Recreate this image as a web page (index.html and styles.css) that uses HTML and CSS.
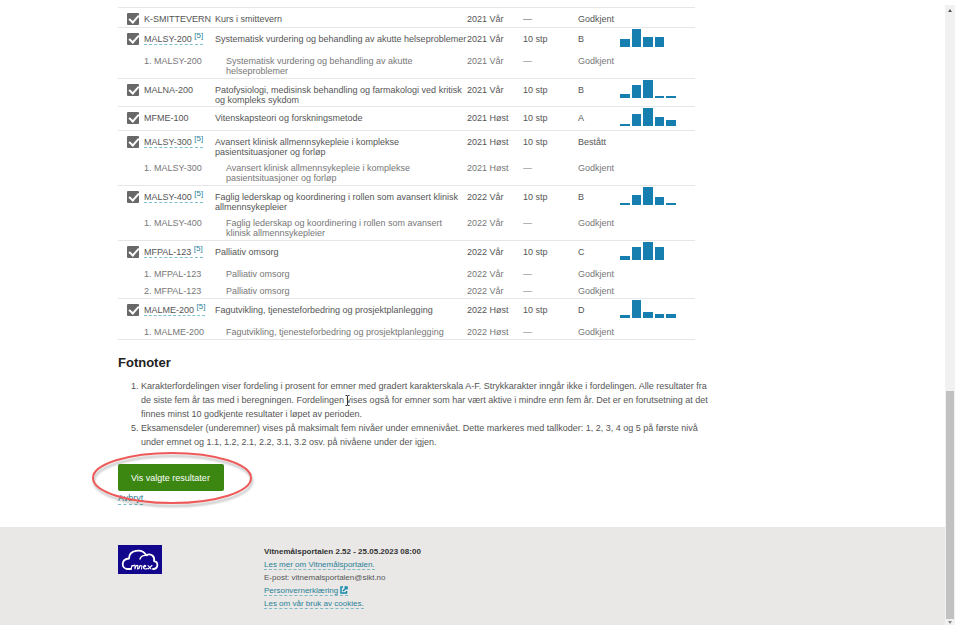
FILE: index.html
```html
<!DOCTYPE html>
<html lang="no">
<head>
  <meta charset="UTF-8">
  <meta name="viewport" content="width=device-width, initial-scale=1.0">
  <title>Vitnemålsportalen</title>
  <link rel="stylesheet" href="styles.css">
</head>
<body>
  <div class="page">
    <main>
      <table class="results">
        <colgroup>
          <col class="col-check">
          <col class="col-code">
          <col class="col-name">
          <col class="col-term">
          <col class="col-credits">
          <col class="col-grade">
          <col class="col-chart">
        </colgroup>
        <tbody>
          <tr class="course">
            <td class="check"><input type="checkbox" aria-label="K-SMITTEVERN" checked></td>
            <td>K-SMITTEVERN</td><td>Kurs i smittevern</td><td>2021 Vår</td><td>—</td><td>Godkjent</td><td></td>
          </tr>
          <tr class="course">
            <td class="check"><input type="checkbox" aria-label="MALSY-200" checked></td>
            <td><a class="code" href="#note5">MALSY-200 <sup>[5]</sup></a></td>
            <td>Systematisk vurdering og behandling av akutte helseproblemer</td><td>2021 Vår</td><td>10 stp</td><td>B</td>
            <td class="chart"><div class="bars"><i style="height:44%"></i><i style="height:100%"></i><i style="height:56%"></i><i style="height:56%"></i></div></td>
          </tr>
          <tr class="part">
            <td></td><td>1. MALSY-200</td><td class="name">Systematisk vurdering og behandling av akutte helseproblemer</td><td>2021 Vår</td><td>—</td><td>Godkjent</td><td></td>
          </tr>
          <tr class="course">
            <td class="check"><input type="checkbox" aria-label="MALNA-200" checked></td>
            <td>MALNA-200</td>
            <td>Patofysiologi, medisinsk behandling og farmakologi ved kritisk og kompleks sykdom</td><td>2021 Vår</td><td>10 stp</td><td>B</td>
            <td class="chart"><div class="bars"><i style="height:25%"></i><i style="height:72%"></i><i style="height:100%"></i><i style="height:12%"></i><i style="height:12%"></i></div></td>
          </tr>
          <tr class="course">
            <td class="check"><input type="checkbox" aria-label="MFME-100" checked></td>
            <td>MFME-100</td><td>Vitenskapsteori og forskningsmetode</td><td>2021 Høst</td><td>10 stp</td><td>A</td>
            <td class="chart"><div class="bars"><i style="height:9%"></i><i style="height:67%"></i><i style="height:100%"></i><i style="height:50%"></i><i style="height:33%"></i></div></td>
          </tr>
          <tr class="course">
            <td class="check"><input type="checkbox" aria-label="MALSY-300" checked></td>
            <td><a class="code" href="#note5">MALSY-300 <sup>[5]</sup></a></td>
            <td>Avansert klinisk allmennsykepleie i komplekse pasientsituasjoner og forløp</td><td>2021 Høst</td><td>10 stp</td><td>Bestått</td><td></td>
          </tr>
          <tr class="part">
            <td></td><td>1. MALSY-300</td><td class="name">Avansert klinisk allmennsykepleie i komplekse pasientsituasjoner og forløp</td><td>2021 Høst</td><td>—</td><td>Godkjent</td><td></td>
          </tr>
          <tr class="course">
            <td class="check"><input type="checkbox" aria-label="MALSY-400" checked></td>
            <td><a class="code" href="#note5">MALSY-400 <sup>[5]</sup></a></td>
            <td>Faglig lederskap og koordinering i rollen som avansert klinisk allmennsykepleier</td><td>2022 Vår</td><td>10 stp</td><td>B</td>
            <td class="chart"><div class="bars"><i style="height:13%"></i><i style="height:56%"></i><i style="height:100%"></i><i style="height:44%"></i><i style="height:13%"></i></div></td>
          </tr>
          <tr class="part">
            <td></td><td>1. MALSY-400</td><td class="name">Faglig lederskap og koordinering i rollen som avansert klinisk allmennsykepleier</td><td>2022 Vår</td><td>—</td><td>Godkjent</td><td></td>
          </tr>
          <tr class="course">
            <td class="check"><input type="checkbox" aria-label="MFPAL-123" checked></td>
            <td><a class="code" href="#note5">MFPAL-123 <sup>[5]</sup></a></td>
            <td>Palliativ omsorg</td><td>2022 Vår</td><td>10 stp</td><td>C</td>
            <td class="chart"><div class="bars"><i style="height:25%"></i><i style="height:75%"></i><i style="height:100%"></i><i style="height:75%"></i></div></td>
          </tr>
          <tr class="part">
            <td></td><td>1. MFPAL-123</td><td class="name">Palliativ omsorg</td><td>2022 Vår</td><td>—</td><td>Godkjent</td><td></td>
          </tr>
          <tr class="part">
            <td></td><td>2. MFPAL-123</td><td class="name">Palliativ omsorg</td><td>2022 Vår</td><td>—</td><td>Godkjent</td><td></td>
          </tr>
          <tr class="course">
            <td class="check"><input type="checkbox" aria-label="MALME-200" checked></td>
            <td><a class="code" href="#note5">MALME-200 <sup>[5]</sup></a></td>
            <td>Fagutvikling, tjenesteforbedring og prosjektplanlegging</td><td>2022 Høst</td><td>10 stp</td><td>D</td>
            <td class="chart"><div class="bars"><i style="height:14%"></i><i style="height:100%"></i><i style="height:35%"></i><i style="height:25%"></i><i style="height:25%"></i></div></td>
          </tr>
          <tr class="part">
            <td></td><td>1. MALME-200</td><td class="name">Fagutvikling, tjenesteforbedring og prosjektplanlegging</td><td>2022 Høst</td><td>—</td><td>Godkjent</td><td></td>
          </tr>
        </tbody>
      </table>

      <h2>Fotnoter</h2>
      <ol class="notes">
        <li>Karakterfordelingen viser fordeling i prosent for emner med gradert karakterskala A-F. Strykkarakter inngår ikke i fordelingen. Alle resultater fra de siste fem år tas med i beregningen. Fordelingen vises også for emner som har vært aktive i mindre enn fem år. Det er en forutsetning at det finnes minst 10 godkjente resultater i løpet av perioden.
          <svg class="cursor" viewBox="0 0 5 11" aria-hidden="true"><path d="M0.5 0.5H2L2.5 1L3 0.5H4.5M2.5 1V10M0.5 10.5H2L2.5 10L3 10.5H4.5"/></svg>
        </li>
        <li id="note5" value="5">Eksamensdeler (underemner) vises på maksimalt fem nivåer under emnenivået. Dette markeres med tallkoder: 1, 2, 3, 4 og 5 på første nivå under emnet og 1.1, 1.2, 2.1, 2.2, 3.1, 3.2 osv. på nivåene under der igjen.</li>
      </ol>

      <div class="actions">
        <button type="button">Vis valgte resultater</button>
        <a class="link" href="#">Avbryt</a>
        <svg class="marker" viewBox="0 0 164 58" aria-hidden="true">
          <ellipse class="marker-shadow" cx="82" cy="30" rx="79" ry="25"/>
          <ellipse class="marker-ring" cx="81" cy="27" rx="79" ry="25"/>
        </svg>
      </div>
    </main>

    <footer>
      <svg class="logo" viewBox="0 0 44 29" role="img" aria-label="EMREX">
        <rect width="44" height="29" fill="#12078c"/>
        <g fill="none" stroke="#fff" stroke-linecap="round" stroke-linejoin="round">
          <path stroke-width="1.8" d="M13 24H9C3 23 3 14 11 13.500C11 5 24 3 28 10C34 8 37 12 36 16C41 17 40 23.500 36 24H35"/>
          <path stroke-width="1.4" d="M22 14C23 11 26 10 29 10.500"/>
          <path stroke-width="1.1" d="M13 24L14 20.500L15 21Q17 19 17 21V24Q18 19 20 21L19.500 24L21 23.500L22 20.500L24 21L23.500 24M26 22C28.500 22 28 20 26.500 20.500C24.500 22 25.500 25 29 23.500M30 20.500L33 24M34 20.500L30 24"/>
        </g>
      </svg>
      <div class="about">
        <strong>Vitnemålsportalen 2.52 - 25.05.2023 08:00</strong>
        <div><a class="link" href="#">Les mer om Vitnemålsportalen.</a></div>
        <div>E-post: vitnemalsportalen@sikt.no</div>
        <div><a class="link" href="#">Personvernerklæring <svg class="external" viewBox="0 0 8 8" aria-hidden="true"><path d="M3 1H1V7H6.500V5M3 5L6 2M4.500 1H7V3.500"/></svg></a></div>
        <div><a class="link" href="#">Les om vår bruk av cookies.</a></div>
      </div>
    </footer>
  </div>

  <div class="scrollbar" aria-hidden="true">
    <span class="arrow up"></span>
    <span class="thumb"></span>
    <span class="arrow down"></span>
  </div>
</body>
</html>
```
FILE: styles.css
```css
* {
  box-sizing: border-box;
}
body {
  margin: 0;
  background: #fff;
  color: #555;
  font-family: "Liberation Sans", Arial, sans-serif;
  font-size: 9px;
}
.page {
  margin-right: 15px;
}
main {
  max-width: 833px;
  padding: 7px 118px 22px;
}

/* results table */
.results {
  width: 100%;
  max-width: 577px;
  table-layout: fixed;
  border-collapse: separate;
  border-spacing: 0;
  border-bottom: 1px solid #e6e6e8;
  line-height: 10px;
}
.col-check { width: 26px; }
.col-code { width: 71px; }
.col-term { width: 56px; }
.col-credits { width: 55px; }
.col-grade { width: 42px; }
.col-chart { width: 75px; }
.results td {
  padding: 5px 0 2px;
  vertical-align: top;
}
.results .course td {
  border-top: 1px solid #e6e6e8;
  padding: 6px 0 1px;
}
.results .part td {
  color: #777;
}
.results .part .name {
  padding-left: 11px;
}
.results .course .check {
  padding: 5px 0 2px 9px;
}
.check input {
  appearance: none;
  display: block;
  width: 12px;
  height: 12px;
  margin: 0;
  border-radius: 1px;
  background: #686868;
}
.check input::after {
  content: "";
  display: block;
  width: 4px;
  height: 8px;
  margin-left: 4px;
  border: solid #fff;
  border-width: 0 2px 2px 0;
  transform: rotate(42deg);
}
.code {
  color: inherit;
  text-decoration: none;
  border-bottom: 1px dashed #7fc0d0;
}
.code sup {
  color: #2a8199;
  font-size: 8px;
  line-height: 1px;
}
.results .course .chart {
  padding: 1px 0 4px;
}
.bars {
  display: grid;
  grid-template-columns: repeat(5, 1fr);
  gap: 2px;
  align-items: end;
  width: 56px;
  height: 18px;
}
.bars i {
  background: #177eb0;
}

h2 {
  margin: 15px 0 8px;
  color: #222;
  font-size: 13px;
  line-height: 16px;
}
.notes {
  position: relative;
  margin: 0;
  padding-left: 23px;
  line-height: 14px;
}
.cursor {
  position: absolute;
  left: 227px;
  top: 16px;
  width: 5px;
  height: 11px;
  fill: none;
  stroke: #333;
}

/* buttons */
.actions {
  position: relative;
  display: flex;
  flex-direction: column;
  align-items: flex-start;
  margin-top: 15px;
}
button {
  height: 27px;
  padding: 0 14px 0 13px;
  border: none;
  border-radius: 2px;
  background: #3c8712;
  color: #fff;
  font: inherit;
  cursor: pointer;
}
.link {
  color: #2a7f96;
  text-decoration: none;
  border-bottom: 1px dashed #7fb9c6;
}
.actions .link {
  margin-top: 2px;
  line-height: 11px;
}
.marker {
  position: absolute;
  left: -27px;
  top: -13px;
  width: 164px;
  height: 58px;
  fill: none;
  pointer-events: none;
}
.marker-ring {
  stroke: #ee5a5a;
  stroke-width: 2;
}
.marker-shadow {
  stroke: #000;
  stroke-width: 2;
  opacity: 0.25;
  filter: blur(1px);
}

footer {
  display: grid;
  grid-template-columns: 146px 1fr;
  padding: 18px 118px 15px;
  background: #e9e8e7;
  font-size: 8px;
  line-height: 13px;
}
.logo {
  width: 44px;
  height: 29px;
}
.about strong {
  display: block;
  color: #333;
}
.external {
  width: 8px;
  height: 8px;
  fill: none;
  stroke: #1589aa;
  stroke-width: 1.5;
  vertical-align: -1px;
}

/* window scrollbar */
.scrollbar {
  position: fixed;
  top: 5px;
  right: 5px;
  bottom: 1px;
  width: 10px;
  display: flex;
  flex-direction: column;
  align-items: center;
  padding: 4px 0 1px;
  background: #f1f1f1;
}
.thumb {
  width: 8px;
  height: 37%;
  margin-top: auto;
  background: #c1c1c1;
}
.arrow {
  border: 2px solid transparent;
}
.up {
  border-top-width: 0;
  border-bottom: 3px solid #555;
}
.down {
  margin-top: 2px;
  border-bottom-width: 0;
  border-top: 3px solid #888;
}
```
